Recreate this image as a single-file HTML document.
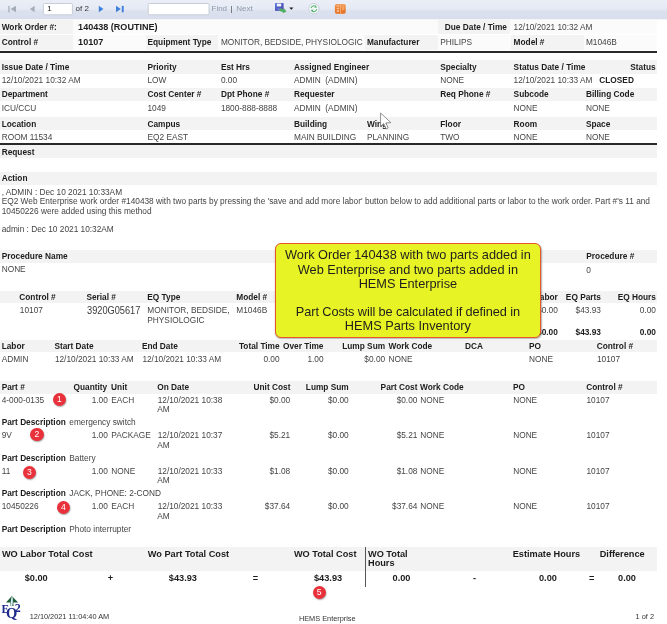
<!DOCTYPE html>
<html><head><meta charset="utf-8"><title>Work Order</title>
<style>
html,body{margin:0;padding:0;background:#fff}
body{width:667px;height:624px;position:relative;overflow:hidden;font-family:"Liberation Sans",Arial,sans-serif;font-size:8.3px;color:#444;filter:blur(0.3px)}
.t{position:absolute;white-space:nowrap;line-height:12px}
.r{text-align:right}
.b{position:absolute}
.bd{font-weight:bold;color:#1c1c1c}
.bb{font-weight:bold;font-size:9.05px;color:#1c1c1c}
.big2{font-size:10.2px;transform:scaleX(0.905);transform-origin:0 50%;color:#3a3a3a}
.long{letter-spacing:0px}
.tt{font-weight:bold;font-size:9.2px;color:#1c1c1c}
.tb{font-size:8px}
.sm{font-size:7.35px;color:#333}
.c{position:absolute;width:13.4px;height:13.4px;border-radius:50%;background:#e8313a;color:#fff;font-size:8.6px;line-height:13.6px;text-align:center;box-shadow:0.5px 1px 1.5px rgba(0,0,0,.35)}
.call{position:absolute;left:274.6px;top:242.7px;width:264.6px;height:93.2px;border:1px solid #e4572a;border-radius:6px;background:#e7f325;text-align:center;font-size:12.76px;line-height:14.15px;color:#1e1e1e;white-space:nowrap;box-shadow:0.5px 1px 1.5px rgba(0,0,0,.3)}
.call div{margin-top:4.7px}
</style></head><body>
<div class="b" style="left:0;top:0;width:667px;height:19px;background:linear-gradient(#ebeef7 0%,#e6eaf4 45%,#dce1ee 58%,#d8deec 100%)"></div>
<div class="b" style="left:0;top:19px;width:667px;height:1px;background:#f4f5f9"></div>
<svg class="b" style="left:0;top:0" width="360" height="19" viewBox="0 0 360 19">
<defs>
<linearGradient id="gb" x1="0" y1="0" x2="1" y2="1"><stop offset="0" stop-color="#5a7be0"/><stop offset="1" stop-color="#4a3fa8"/></linearGradient>
<linearGradient id="go" x1="0" y1="0" x2="0" y2="1"><stop offset="0" stop-color="#f0a062"/><stop offset="0.5" stop-color="#ea7e30"/><stop offset="1" stop-color="#e8711f"/></linearGradient>
</defs>
<!-- first -->
<rect x="8.3" y="5.9" width="1.3" height="6.4" fill="#a7adb8"/>
<path d="M16 5.8 L10.6 9.05 L16 12.3 Z" fill="#a7adb8"/>
<!-- prev -->
<path d="M34.6 5.8 L29.9 9.05 L34.6 12.3 Z" fill="#a7adb8"/>
<!-- page box -->
<rect x="43.4" y="3.5" width="29" height="11.3" rx="1" fill="#fff" stroke="#c3c9d4" stroke-width="0.9"/>
<!-- next -->
<path d="M98.8 5.8 L103.4 9.05 L98.8 12.3 Z" fill="#3f80db"/>
<!-- last -->
<path d="M116 5.8 L120.8 9.05 L116 12.3 Z" fill="#3f80db"/>
<rect x="121.8" y="5.9" width="1.9" height="6.4" fill="#3f80db"/>
<!-- find box -->
<rect x="148.2" y="3.5" width="60.8" height="11.3" rx="1" fill="#fff" stroke="#c3c9d4" stroke-width="0.9"/>
<!-- save -->
<rect x="275" y="2.9" width="8.6" height="8" rx="0.6" fill="url(#gb)"/>
<rect x="276.9" y="3.6" width="4.3" height="2.8" fill="#f4f6fb"/>
<rect x="277.3" y="8.1" width="3.6" height="2.8" fill="#6b78c8"/>
<path d="M279.6 9.2 L283.4 9.2 L283.4 7.9 L286.6 10.6 L283.4 13.3 L283.4 12 L279.6 12 Z" fill="#4fae62" transform="rotate(18 283 10.6)"/>
<path d="M289.2 7.5 L293.4 7.5 L291.3 9.8 Z" fill="#1a1a1a"/>
<!-- refresh -->
<circle cx="313.9" cy="8.7" r="5.2" fill="#f6f9fb" stroke="#c4cbd7" stroke-width="0.9"/>
<path d="M311 8.2 A3 3 0 0 1 316 6.6" fill="none" stroke="#5cb874" stroke-width="1.1"/>
<path d="M315.2 5.2 L317.3 7.4 L314.4 7.8 Z" fill="#5cb874"/>
<path d="M316.8 9.2 A3 3 0 0 1 311.8 10.8" fill="none" stroke="#5cb874" stroke-width="1.1"/>
<path d="M312.6 12.2 L310.5 10 L313.4 9.6 Z" fill="#5cb874"/>
<!-- orange -->
<rect x="334.9" y="4" width="10.8" height="9.7" rx="1.6" fill="url(#go)"/>
<rect x="340" y="4.6" width="0.7" height="8.5" fill="#f6b98a"/>
<rect x="336.8" y="5.6" width="2.2" height="1.1" fill="#f9c9a2"/>
<rect x="336.8" y="8" width="2.2" height="1.1" fill="#f9c9a2"/>
<rect x="336.8" y="10.4" width="2.2" height="1.3" fill="#fde3c8"/>
<rect x="341.8" y="5.6" width="2.4" height="4.6" fill="#f2a066"/>
</svg>
<div class="t tb" style="left:47.3px;top:3px;color:#222">1</div>
<div class="t tb" style="left:75.6px;top:3px;color:#333">of 2</div>
<div class="t tb" style="left:211.5px;top:3px;color:#8e98aa">Find</div>
<div class="t tb" style="left:230.6px;top:3px;color:#444">|</div>
<div class="t tb" style="left:236.2px;top:3px;color:#8e98aa">Next</div>

<div class="b" style="left:0px;top:20px;width:73px;height:14.3px;background:#f3f3f3;"></div>
<div class="b" style="left:0px;top:35.4px;width:73px;height:14.2px;background:#f3f3f3;"></div>
<div class="b" style="left:73px;top:20px;width:584.3px;height:14.3px;background:#fbfbfb;"></div>
<div class="b" style="left:73px;top:35.4px;width:584.3px;height:14.2px;background:#fbfbfb;"></div>
<div class="b" style="left:437.8px;top:20px;width:72.7px;height:14.3px;background:#f3f3f3;"></div>
<div class="b" style="left:145.5px;top:35.4px;width:72.8px;height:14.2px;background:#f3f3f3;"></div>
<div class="b" style="left:364.6px;top:35.4px;width:73.0px;height:14.2px;background:#f3f3f3;"></div>
<div class="b" style="left:510.8px;top:35.4px;width:73.0px;height:14.2px;background:#f3f3f3;"></div>
<div class="b" style="left:0px;top:51.4px;width:657.3px;height:1.6px;background:#2a2a2a;"></div>
<div class="b" style="left:0px;top:60.3px;width:657.3px;height:13.5px;background:#f3f3f3;"></div>
<div class="b" style="left:0px;top:87.7px;width:657.3px;height:13.1px;background:#f3f3f3;"></div>
<div class="b" style="left:0px;top:117.1px;width:657.3px;height:13.1px;background:#f3f3f3;"></div>
<div class="b" style="left:0px;top:143.4px;width:657.3px;height:1.4px;background:#2a2a2a;"></div>
<div class="b" style="left:0px;top:144.8px;width:657.3px;height:13.2px;background:#f3f3f3;"></div>
<div class="b" style="left:0px;top:171.6px;width:657.3px;height:13.0px;background:#f3f3f3;"></div>
<div class="b" style="left:0px;top:250.2px;width:657.3px;height:12.8px;background:#f3f3f3;"></div>
<div class="b" style="left:0px;top:290.6px;width:657.3px;height:12.4px;background:#f3f3f3;"></div>
<div class="b" style="left:0px;top:340.2px;width:657.3px;height:12.3px;background:#f3f3f3;"></div>
<div class="b" style="left:0px;top:380.6px;width:657.3px;height:13.0px;background:#f3f3f3;"></div>
<div class="b" style="left:0px;top:547.1px;width:657.3px;height:23.9px;background:#f3f3f3;"></div>
<div class="b" style="left:364.8px;top:547.3px;width:1px;height:40px;background:#555;"></div>
<div class="t bd" style="left:1.7px;top:21px;">Work Order #:</div>
<div class="t bb" style="left:78.1px;top:21px;">140438 (ROUTINE)</div>
<div class="t bd" style="left:444.8px;top:21px;">Due Date / Time</div>
<div class="t " style="left:513.6px;top:21px;">12/10/2021 10:32 AM</div>
<div class="t bd" style="left:1.7px;top:36px;">Control #</div>
<div class="t bb" style="left:78.1px;top:36px;">10107</div>
<div class="t bd" style="left:147.5px;top:36px;">Equipment Type</div>
<div class="t " style="left:220.9px;top:36px;">MONITOR, BEDSIDE, PHYSIOLOGIC</div>
<div class="t bd" style="left:366.9px;top:36px;">Manufacturer</div>
<div class="t " style="left:440.2px;top:36px;">PHILIPS</div>
<div class="t bd" style="left:513.6px;top:36px;">Model #</div>
<div class="t " style="left:585.9px;top:36px;">M1046B</div>
<div class="t bd" style="left:1.7px;top:61px;">Issue Date / Time</div>
<div class="t bd" style="left:147.5px;top:61px;">Priority</div>
<div class="t bd" style="left:220.9px;top:61px;">Est Hrs</div>
<div class="t bd" style="left:294.0px;top:61px;">Assigned Engineer</div>
<div class="t bd" style="left:440.2px;top:61px;">Specialty</div>
<div class="t bd" style="left:513.6px;top:61px;">Status Date / Time</div>
<div class="t r bd" style="right:11.4px;top:61px;">Status</div>
<div class="t " style="left:1.7px;top:74px;">12/10/2021 10:32 AM</div>
<div class="t " style="left:147.5px;top:74px;">LOW</div>
<div class="t " style="left:220.9px;top:74px;">0.00</div>
<div class="t " style="left:294.0px;top:74px;">ADMIN&nbsp; (ADMIN)</div>
<div class="t " style="left:440.2px;top:74px;">NONE</div>
<div class="t " style="left:513.6px;top:74px;">12/10/2021 10:33 AM</div>
<div class="t bd" style="left:599.3px;top:74px;">CLOSED</div>
<div class="t bd" style="left:1.7px;top:88px;">Department</div>
<div class="t bd" style="left:147.5px;top:88px;">Cost Center #</div>
<div class="t bd" style="left:220.9px;top:88px;">Dpt Phone #</div>
<div class="t bd" style="left:294.0px;top:88px;">Requester</div>
<div class="t bd" style="left:440.2px;top:88px;">Req Phone #</div>
<div class="t bd" style="left:513.6px;top:88px;">Subcode</div>
<div class="t bd" style="left:585.9px;top:88px;">Billing Code</div>
<div class="t " style="left:1.7px;top:102px;">ICU/CCU</div>
<div class="t " style="left:147.5px;top:102px;">1049</div>
<div class="t " style="left:220.9px;top:102px;">1800-888-8888</div>
<div class="t " style="left:294.0px;top:102px;">ADMIN&nbsp; (ADMIN)</div>
<div class="t " style="left:513.6px;top:102px;">NONE</div>
<div class="t " style="left:585.9px;top:102px;">NONE</div>
<div class="t bd" style="left:1.7px;top:118px;">Location</div>
<div class="t bd" style="left:147.5px;top:118px;">Campus</div>
<div class="t bd" style="left:294.0px;top:118px;">Building</div>
<div class="t bd" style="left:366.9px;top:118px;">Wing</div>
<div class="t bd" style="left:440.2px;top:118px;">Floor</div>
<div class="t bd" style="left:513.6px;top:118px;">Room</div>
<div class="t bd" style="left:585.9px;top:118px;">Space</div>
<div class="t " style="left:1.7px;top:131px;">ROOM 11534</div>
<div class="t " style="left:147.5px;top:131px;">EQ2 EAST</div>
<div class="t " style="left:294.0px;top:131px;">MAIN BUILDING</div>
<div class="t " style="left:366.9px;top:131px;">PLANNING</div>
<div class="t " style="left:440.2px;top:131px;">TWO</div>
<div class="t " style="left:513.6px;top:131px;">NONE</div>
<div class="t " style="left:585.9px;top:131px;">NONE</div>
<div class="t bd" style="left:1.7px;top:146px;">Request</div>
<div class="t bd" style="left:1.7px;top:172px;">Action</div>
<div class="t " style="left:1.7px;top:186px;">, ADMIN : Dec 10 2021 10:33AM</div>
<div class="t long" style="left:1.7px;top:195px;">EQ2 Web Enterprise work order #140438 with two parts by pressing the 'save and add more labor' button below to add additional parts or labor to the work order. Part #'s 11 and</div>
<div class="t " style="left:1.7px;top:205px;">10450226 were added using this method</div>
<div class="t " style="left:1.7px;top:223px;">admin : Dec 10 2021 10:32AM</div>
<div class="t bd" style="left:1.7px;top:250px;">Procedure Name</div>
<div class="t bd" style="left:586.3px;top:250px;">Procedure #</div>
<div class="t " style="left:1.7px;top:263px;">NONE</div>
<div class="t " style="left:586.3px;top:264px;">0</div>
<div class="t bd" style="left:19.3px;top:291px;">Control #</div>
<div class="t bd" style="left:86.4px;top:291px;">Serial #</div>
<div class="t bd" style="left:147.3px;top:291px;">EQ Type</div>
<div class="t bd" style="left:236.3px;top:291px;">Model #</div>
<div class="t r bd" style="right:109.2px;top:291px;">EQ Labor</div>
<div class="t r bd" style="right:66.1px;top:291px;">EQ Parts</div>
<div class="t r bd" style="right:11.1px;top:291px;">EQ Hours</div>
<div class="t " style="left:19.8px;top:304px;">10107</div>
<div class="t big2" style="left:86.8px;top:305px;">3920G05617</div>
<div class="t " style="left:147.3px;top:304px;">MONITOR, BEDSIDE,</div>
<div class="t " style="left:147.3px;top:314px;">PHYSIOLOGIC</div>
<div class="t " style="left:236.3px;top:304px;">M1046B</div>
<div class="t r " style="right:109.2px;top:304px;">$0.00</div>
<div class="t r " style="right:66.1px;top:304px;">$43.93</div>
<div class="t r " style="right:11.1px;top:304px;">0.00</div>
<div class="t r bd" style="right:109.2px;top:326px;">$0.00</div>
<div class="t r bd" style="right:66.1px;top:326px;">$43.93</div>
<div class="t r bd" style="right:11.1px;top:326px;">0.00</div>
<div class="t bd" style="left:1.7px;top:340px;">Labor</div>
<div class="t bd" style="left:54.4px;top:340px;">Start Date</div>
<div class="t bd" style="left:141.9px;top:340px;">End Date</div>
<div class="t r bd" style="right:387.4px;top:340px;">Total Time</div>
<div class="t bd" style="left:283.0px;top:340px;">Over Time</div>
<div class="t r bd" style="right:281.9px;top:340px;">Lump Sum</div>
<div class="t bd" style="left:388.5px;top:340px;">Work Code</div>
<div class="t bd" style="left:465.0px;top:340px;">DCA</div>
<div class="t bd" style="left:529.0px;top:340px;">PO</div>
<div class="t bd" style="left:596.7px;top:340px;">Control #</div>
<div class="t " style="left:1.7px;top:353px;">ADMIN</div>
<div class="t " style="left:54.9px;top:353px;">12/10/2021 10:33 AM</div>
<div class="t " style="left:142.4px;top:353px;">12/10/2021 10:33 AM</div>
<div class="t r " style="right:387.4px;top:353px;">0.00</div>
<div class="t r " style="right:343.4px;top:353px;">1.00</div>
<div class="t r " style="right:281.9px;top:353px;">$0.00</div>
<div class="t " style="left:388.5px;top:353px;">NONE</div>
<div class="t " style="left:529.0px;top:353px;">NONE</div>
<div class="t " style="left:597.0px;top:353px;">10107</div>
<div class="t bd" style="left:1.7px;top:381px;">Part #</div>
<div class="t r bd" style="right:559.8px;top:381px;">Quantity</div>
<div class="t bd" style="left:111.1px;top:381px;">Unit</div>
<div class="t bd" style="left:157.3px;top:381px;">On Date</div>
<div class="t r bd" style="right:376.6px;top:381px;">Unit Cost</div>
<div class="t r bd" style="right:318.3px;top:381px;">Lump Sum</div>
<div class="t r bd" style="right:249.5px;top:381px;">Part Cost</div>
<div class="t bd" style="left:420.1px;top:381px;">Work Code</div>
<div class="t bd" style="left:513.0px;top:381px;">PO</div>
<div class="t bd" style="left:586.2px;top:381px;">Control #</div>
<div class="t " style="left:1.7px;top:394px;">4-000-0135</div>
<div class="t r " style="right:559.2px;top:394px;">1.00</div>
<div class="t " style="left:111.3px;top:394px;">EACH</div>
<div class="t " style="left:157.7px;top:394px;">12/10/2021 10:38</div>
<div class="t " style="left:157.3px;top:403px;">AM</div>
<div class="t r " style="right:376.8px;top:394px;">$0.00</div>
<div class="t r " style="right:318.3px;top:394px;">$0.00</div>
<div class="t r " style="right:249.6px;top:394px;">$0.00</div>
<div class="t " style="left:420.3px;top:394px;">NONE</div>
<div class="t " style="left:513.2px;top:394px;">NONE</div>
<div class="t " style="left:586.5px;top:394px;">10107</div>
<div class="t bd" style="left:1.7px;top:416px;">Part Description</div>
<div class="t " style="left:69.3px;top:416px;">emergency switch</div>
<div class="c" style="left:52.7px;top:392.6px">1</div>
<div class="t " style="left:1.7px;top:429px;">9V</div>
<div class="t r " style="right:559.2px;top:429px;">1.00</div>
<div class="t " style="left:111.3px;top:429px;">PACKAGE</div>
<div class="t " style="left:157.7px;top:429px;">12/10/2021 10:37</div>
<div class="t " style="left:157.3px;top:439px;">AM</div>
<div class="t r " style="right:376.8px;top:429px;">$5.21</div>
<div class="t r " style="right:318.3px;top:429px;">$0.00</div>
<div class="t r " style="right:249.6px;top:429px;">$5.21</div>
<div class="t " style="left:420.3px;top:429px;">NONE</div>
<div class="t " style="left:513.2px;top:429px;">NONE</div>
<div class="t " style="left:586.5px;top:429px;">10107</div>
<div class="t bd" style="left:1.7px;top:452px;">Part Description</div>
<div class="t " style="left:69.3px;top:452px;">Battery</div>
<div class="c" style="left:30.2px;top:427.7px">2</div>
<div class="t " style="left:1.7px;top:465px;">11</div>
<div class="t r " style="right:559.2px;top:465px;">1.00</div>
<div class="t " style="left:111.3px;top:465px;">NONE</div>
<div class="t " style="left:157.7px;top:465px;">12/10/2021 10:33</div>
<div class="t " style="left:157.3px;top:474px;">AM</div>
<div class="t r " style="right:376.8px;top:465px;">$1.08</div>
<div class="t r " style="right:318.3px;top:465px;">$0.00</div>
<div class="t r " style="right:249.6px;top:465px;">$1.08</div>
<div class="t " style="left:420.3px;top:465px;">NONE</div>
<div class="t " style="left:513.2px;top:465px;">NONE</div>
<div class="t " style="left:586.5px;top:465px;">10107</div>
<div class="t bd" style="left:1.7px;top:487px;">Part Description</div>
<div class="t " style="left:69.3px;top:487px;">JACK, PHONE: 2-COND</div>
<div class="c" style="left:22.6px;top:465.7px">3</div>
<div class="t " style="left:1.7px;top:500px;">10450226</div>
<div class="t r " style="right:559.2px;top:500px;">1.00</div>
<div class="t " style="left:111.3px;top:500px;">EACH</div>
<div class="t " style="left:157.7px;top:500px;">12/10/2021 10:33</div>
<div class="t " style="left:157.3px;top:510px;">AM</div>
<div class="t r " style="right:376.8px;top:500px;">$37.64</div>
<div class="t r " style="right:318.3px;top:500px;">$0.00</div>
<div class="t r " style="right:249.6px;top:500px;">$37.64</div>
<div class="t " style="left:420.3px;top:500px;">NONE</div>
<div class="t " style="left:513.2px;top:500px;">NONE</div>
<div class="t " style="left:586.5px;top:500px;">10107</div>
<div class="t bd" style="left:1.7px;top:523px;">Part Description</div>
<div class="t " style="left:69.3px;top:523px;">Photo interrupter</div>
<div class="c" style="left:56.8px;top:501.1px">4</div>
<div class="c" style="left:312.5px;top:586.1px">5</div>
<div class="t tt" style="left:1.9px;top:548px;">WO Labor Total Cost</div>
<div class="t tt" style="left:147.8px;top:548px;">Wo Part Total Cost</div>
<div class="t tt" style="left:293.9px;top:548px;">WO Total Cost</div>
<div class="t tt" style="left:368.0px;top:548px;">WO Total</div>
<div class="t tt" style="left:368.0px;top:557px;">Hours</div>
<div class="t tt" style="left:512.7px;top:548px;">Estimate Hours</div>
<div class="t tt" style="left:599.7px;top:548px;">Difference</div>
<div class="t tt" style="left:24.7px;top:572px;">$0.00</div>
<div class="t tt" style="left:107.7px;top:572px;">+</div>
<div class="t tt" style="left:168.8px;top:572px;">$43.93</div>
<div class="t tt" style="left:252.7px;top:572px;">=</div>
<div class="t tt" style="left:314.0px;top:572px;">$43.93</div>
<div class="t tt" style="left:392.6px;top:572px;">0.00</div>
<div class="t tt" style="left:473.1px;top:572px;">-</div>
<div class="t tt" style="left:539.0px;top:572px;">0.00</div>
<div class="t tt" style="left:589.0px;top:572px;">=</div>
<div class="t tt" style="left:618.1px;top:572px;">0.00</div>
<div class="t sm" style="left:29.7px;top:611px;">12/10/2021 11:04:40 AM</div>
<div class="t sm" style="left:298.9px;top:613px;">HEMS Enterprise</div>
<div class="t sm" style="left:635.6px;top:611px;">1 of 2</div>
<div class="call"><div>Work Order 140438 with two parts added in<br>Web Enterprise and two parts added in<br>HEMS Enterprise<br><br><span style="letter-spacing:-0.095px">Part Costs will be calculated if defined in</span><br>HEMS Parts Inventory</div></div>
<svg class="b" style="left:376px;top:108px" width="22" height="26" viewBox="376 108 22 26"><path d="M380.6 113 L380.6 126.3 L383.8 123.6 L386.2 128.9 L388.2 128 L385.9 122.9 L390.9 122.7 Z" fill="#fff" stroke="#777" stroke-width="0.8" stroke-linejoin="round"/></svg>
<svg class="b" style="left:0;top:594px" width="26" height="28" viewBox="0 594 26 28">
<path d="M11.8 596 L18.2 602.6 L13.2 602.6 L13.6 606 L10.6 606 L10.4 602.6 L6 602.6 Z" fill="#1f5c3c"/>
<path d="M11.7 596.4 C10.6 600 10.4 604 11.5 609 C13 604 13.2 600 12.5 596.4 Z" fill="#d6eef2"/>
<text x="1.6" y="613.2" font-family="Liberation Serif, serif" font-size="11.5" font-weight="bold" fill="#1d2a8c">E</text>
<text x="6" y="617.6" font-family="Liberation Serif, serif" font-size="14.5" font-weight="bold" fill="#1d2a8c">Q</text>
<text x="14.8" y="612.4" font-family="Liberation Serif, serif" font-size="12" font-weight="bold" fill="#1d2a8c">2</text>
</svg>
</body></html>
